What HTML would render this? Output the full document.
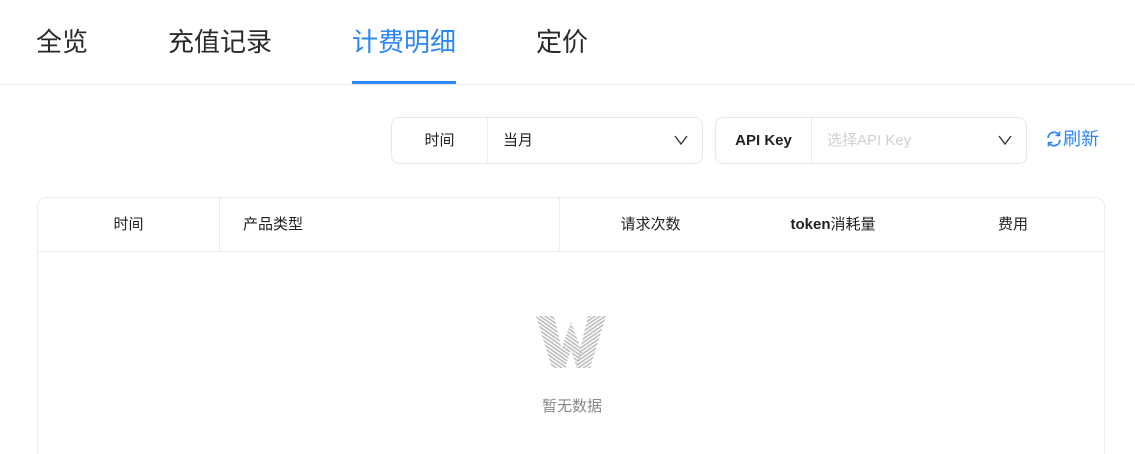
<!DOCTYPE html>
<html style="width:1135px;height:454px;overflow:hidden"><head><meta charset="utf-8"><style>
*{margin:0;padding:0;box-sizing:border-box}
body{width:1135px;height:454px;overflow:hidden;background:#fff;font-family:"Liberation Sans","Noto Sans CJK SC",sans-serif;color:#222;position:relative}
.tab{position:absolute;top:24px;font-size:26px;line-height:36px;color:#2a2a2a}
.hdr{position:absolute;left:0;top:84px;width:1135px;height:1px;background:#ececec}
.ul{position:absolute;left:352px;top:81px;width:104px;height:3px;background:#2d87f3}
.box{position:absolute;top:117px;height:47px;border:1px solid #e8e8e8;border-radius:8px;font-size:15px}
.box .l{position:absolute;left:0;top:0;height:45px;line-height:45px;text-align:center;border-right:1px solid #ececec}
.box .v{position:absolute;top:0;line-height:45px}
.chev{position:absolute;right:14px;top:16px}
.tbl{position:absolute;left:37px;top:197px;width:1068px;height:270px;border:1px solid #ececec;border-bottom:0;border-radius:10px 10px 0 0}
.th{position:absolute;top:0;height:54px;line-height:54px;font-size:15px;border-bottom:1px solid #ececec}
</style></head><body>
<div class="tab" style="left:36px">全览</div>
<div class="tab" style="left:168px">充值记录</div>
<div class="tab" style="left:352px;color:#2d87f3">计费明细</div>
<div class="tab" style="left:536px">定价</div>
<div class="hdr"></div><div class="ul"></div>

<div class="box" style="left:391px;width:312px">
<div class="l" style="width:96px">时间</div>
<div class="v" style="left:111px">当月</div>
<svg class="chev" width="14" height="12" viewBox="0 0 14 12"><path d="M1 2l6 8 6-8" fill="none" stroke="#333" stroke-width="1.4"/></svg>
</div>
<div class="box" style="left:715px;width:312px">
<div class="l" style="width:96px;font-weight:bold">API Key</div>
<div class="v" style="left:111px;color:#d0d0d0">选择API Key</div>
<svg class="chev" width="14" height="12" viewBox="0 0 14 12"><path d="M1 2l6 8 6-8" fill="none" stroke="#333" stroke-width="1.4"/></svg>
</div>
<div style="position:absolute;left:1045px;top:127px;font-size:18px;color:#2d87f3;line-height:24px">
<svg width="18" height="18" viewBox="0 0 18 18" style="vertical-align:-3px"><path d="M3 8a6 6 0 0 1 11-3M15 10a6 6 0 0 1-11 3" fill="none" stroke="#2d87f3" stroke-width="1.8"/><path d="M14.5 1.5v4h-4M3.5 16.5v-4h4" fill="none" stroke="#2d87f3" stroke-width="1.6"/></svg>刷新</div>

<div class="tbl">
<div class="th" style="left:0;width:182px;text-align:center;border-right:1px solid #ececec">时间</div>
<div class="th" style="left:182px;width:340px;padding-left:23px;border-right:1px solid #ececec">产品类型</div>
<div class="th" style="left:522px;width:545px"></div>
<div class="th" style="left:560px;width:105px;text-align:center;border:0">请求次数</div>
<div class="th" style="left:735px;width:120px;text-align:center;border:0;font-weight:bold">token<span style="font-weight:normal">消耗量</span></div>
<div class="th" style="left:935px;width:80px;text-align:center;border:0">费用</div>
<svg style="position:absolute;left:498px;top:118px" width="70" height="54" viewBox="0 0 70 54">
<defs><pattern id="p" width="3" height="3" patternUnits="userSpaceOnUse" patternTransform="rotate(-35)"><rect width="3" height="1.6" fill="#bdbdbd"/></pattern>
<pattern id="q" width="3" height="3" patternUnits="userSpaceOnUse" patternTransform="rotate(35)"><rect width="3" height="1.6" fill="#bdbdbd"/></pattern></defs>
<polygon points="0,0 18,0 30,52 16,52" fill="url(#q)"/>
<polygon points="52,0 70,0 54,52 40,52" fill="url(#p)"/>
<polygon points="35,6 46,36 41,52 35,34 29,52 24,36" fill="url(#q)"/>
</svg>
<div style="position:absolute;left:0;width:1068px;top:197px;text-align:center;font-size:15px;color:#888">暂无数据</div>
</div>
</body></html>
